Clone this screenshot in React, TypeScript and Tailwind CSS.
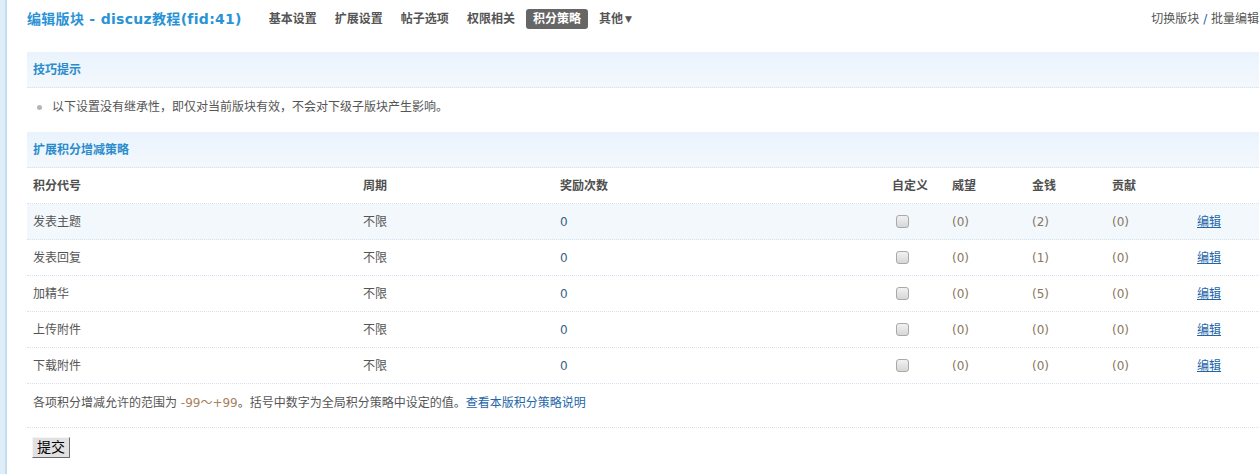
import React from "react";

const font = "font-['Tahoma','DejaVu_Sans','Noto_Sans_CJK_SC',sans-serif]";

const navItems = ["基本设置", "扩展设置", "帖子选项", "权限相关", "积分策略", "其他"];

const rows = [
  { name: "发表主题", cycle: "不限", times: "0", w: "(0)", m: "(2)", g: "(0)" },
  { name: "发表回复", cycle: "不限", times: "0", w: "(0)", m: "(1)", g: "(0)" },
  { name: "加精华", cycle: "不限", times: "0", w: "(0)", m: "(5)", g: "(0)" },
  { name: "上传附件", cycle: "不限", times: "0", w: "(0)", m: "(0)", g: "(0)" },
  { name: "下载附件", cycle: "不限", times: "0", w: "(0)", m: "(0)", g: "(0)" },
];

const cols = "grid grid-cols-[330px_197px_332px_60px_80px_80px_85px_68px]";

function SectionTitle({ children }: { children: React.ReactNode }) {
  return (
    <div className="h-[36px] flex items-center px-[6px] bg-gradient-to-b from-[#eaf3fc] to-[#f3f8fd] border-b border-dotted border-[#d3e3f1]">
      <span className="text-[12px] font-bold text-[#2b8ccc]">{children}</span>
    </div>
  );
}

export default function App() {
  return (
    <div className={`flex w-[1259px] min-h-[474px] overflow-hidden bg-white text-[12px] text-[#555] ${font}`}>
      <div className="w-[7px] shrink-0 bg-[#deeef9] border-r-2 border-[#c6ddef]" />
      <div className="flex-1 pl-[20px]">
        {/* header */}
        <div className="h-[52px] flex items-start pt-[9px]">
          <h1 className="h-[20px] leading-[20px] text-[14px] tracking-[0.3px] font-bold text-[#2a93d6] whitespace-nowrap">
            编辑版块 - discuz教程(fid:41)
          </h1>
          <ul className="flex gap-[4px] ml-[20px]">
            {navItems.map((n) => (
              <li
                key={n}
                className={
                  "h-[20px] leading-[20px] px-[7px] rounded-[3px] font-bold whitespace-nowrap " +
                  (n === "积分策略" ? "bg-[#666] text-white" : "text-[#555]")
                }
              >
                {n}
                {n === "其他" && <span className="ml-[2px] text-[9px] align-[1px]">▼</span>}
              </li>
            ))}
          </ul>
          <div className="ml-auto h-[20px] leading-[20px] whitespace-nowrap text-[#555]">
            切换版块 <span className="text-[#2366a8]">/</span> 批量编辑
          </div>
        </div>

        {/* tips */}
        <SectionTitle>技巧提示</SectionTitle>
        <div className="h-[44px] flex items-center pl-[10px] pb-[6px]">
          <span className="w-[5px] h-[5px] rounded-full bg-[#b5b5b5] mr-[10px]" />
          <span>以下设置没有继承性，即仅对当前版块有效，不会对下级子版块产生影响。</span>
        </div>

        {/* credits */}
        <SectionTitle>扩展积分增减策略</SectionTitle>
        <div className={`${cols} h-[36px] items-center border-b border-dotted border-[#d3e3f1] font-bold text-[#4f4f4f]`}>
          <div className="px-[6px]">积分代号</div>
          <div className="px-[6px]">周期</div>
          <div className="px-[6px]">奖励次数</div>
          <div className="px-[6px]">自定义</div>
          <div className="px-[6px]">威望</div>
          <div className="px-[6px]">金钱</div>
          <div className="px-[6px]">贡献</div>
          <div />
        </div>
        {rows.map((r, i) => (
          <div
            key={r.name}
            className={`${cols} h-[36px] items-center border-b border-dotted border-[#d3e3f1] ${i === 0 ? "bg-[#f2f8fc]" : ""}`}
          >
            <div className="px-[6px]">{r.name}</div>
            <div className="px-[6px]">{r.cycle}</div>
            <div className="px-[6px] text-[#3a5f86]">{r.times}</div>
            <div className="px-[10px] flex">
              <input
                type="checkbox"
                className="appearance-none w-[13px] h-[13px] rounded-[3px] border border-[#a9a9a9] bg-gradient-to-b from-[#f2f2f2] to-[#d6d6d6]"
              />
            </div>
            <div className="px-[6px] text-[#8a7560]">{r.w}</div>
            <div className="px-[6px] text-[#8a7560]">{r.m}</div>
            <div className="px-[6px] text-[#8a7560]">{r.g}</div>
            <div className="px-[6px]">
              <a href="#" className="text-[#2366a8] underline">编辑</a>
            </div>
          </div>
        ))}
        <div className="h-[44px] flex items-start pt-[10px] px-[6px] border-b border-dotted border-[#d3e3f1]">
          <span>
            各项积分增减允许的范围为 <span className="text-[#a9825c]">-99～+99</span>。括号中数字为全局积分策略中设定的值。
            <a href="#" className="text-[#2366a8]">查看本版积分策略说明</a>
          </span>
        </div>
        <div className="pt-[9px] px-[5px]">
          <button className="h-[21px] px-[4px] text-[14px] leading-[19px] text-black bg-[#e1e1e1] border border-t-[#f5f5f5] border-l-[#f5f5f5] border-r-[#6a6a6a] border-b-[#6a6a6a]">
            提交
          </button>
        </div>
      </div>
    </div>
  );
}
